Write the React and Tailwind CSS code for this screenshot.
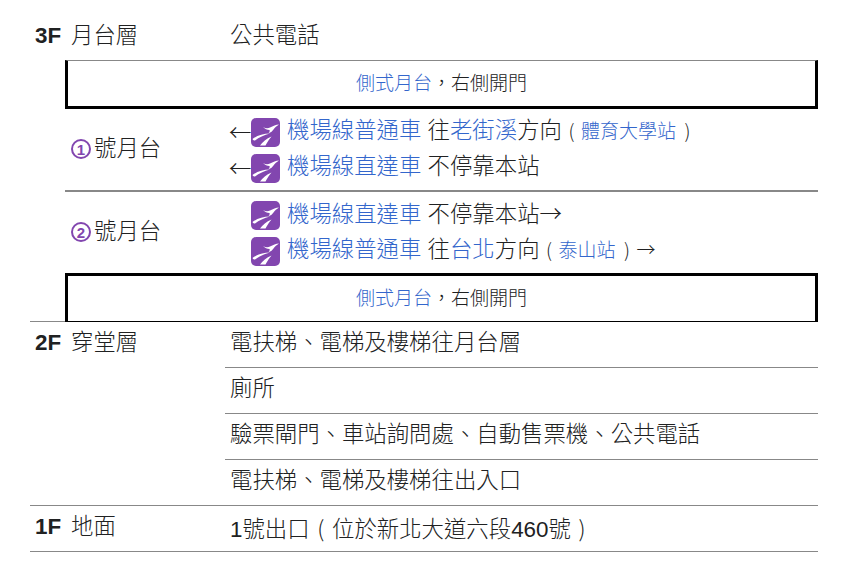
const FONT = "font-['Liberation_Sans','Noto_Sans_CJK_TC',sans-serif]";

const LineLogo = () => (
  <svg viewBox="0 0 29 29" className="w-[29px] h-[29px] shrink-0">
    <rect width="29" height="29" rx="5" fill="#8246af" />
    <path d="M1.5 21C6 17.5 12 15.5 19 15.5C13 17 8 19.5 4 22.5C3 22.5 2 22 1.5 21Z" fill="#fff" />
    <path d="M9 27.5C11.5 24 15.5 20.5 20.5 18.5C18.5 21 16 24.5 14.5 27.5Z" fill="#fff" />
    <path d="M12 9C14.5 10.5 17 10.5 19 9.5C22 8 25 6.5 28 6.5C25.5 8 24 9.5 22.5 11.5C21.5 13 20 14.5 17.5 15C18.5 14 19 13 18.5 12C16 12 14 11 12 9Z" fill="#fff" />
  </svg>
);

const Link = ({ children }) => <span className="text-[#3366cc]">{children}</span>;
const Small = ({ children }) => <span className="text-[19px]">{children}</span>;
const Arrow = ({ children }) => <span className="font-['Noto_Sans_CJK_TC']">{children}</span>;
const Paren = ({ children, className = '' }) => (
  <span className={`inline-block w-[1em] text-center font-['Noto_Sans_CJK_TC'] ${className}`}>{children}</span>
);

const SideBox = ({ className }) => (
  <div className={`h-[49px] flex-1 flex items-center justify-center border-x-[3px] border-black text-[19px] ${className}`}>
    <span><Link>側式月台</Link>，右側開門</span>
  </div>
);

const TrainLine = ({ before, name, children }) => (
  <div className="h-[35px] mb-px flex items-center">
    <span className="w-[22px] shrink-0"><Arrow>{before}</Arrow></span>
    <LineLogo />
    <span className="ml-[7px] -mt-[4px] whitespace-nowrap">
      <Link>{name}</Link> {children}
    </span>
  </div>
);

const Platform = ({ mark, className, children }) => (
  <div className={`flex ${className}`}>
    <div className="w-[164px] pl-[6px] -mt-[2px] shrink-0 flex items-center">
      <span className="w-5 h-5 mr-[3px] mt-[1px] flex items-center justify-center rounded-full border-2 border-[#8246af] text-[15px] leading-none font-bold text-[#8246af]">{mark}</span>
      <span>號月台</span>
    </div>
    <div className="pt-[6px]">{children}</div>
  </div>
);

const FloorName = ({ floor, name }) => (
  <div className="flex pl-[5px]">
    <span className="w-[36px] font-bold">{floor}</span>
    <span>{name}</span>
  </div>
);

export default function App() {
  return (
    <div className={`${FONT} bg-white min-h-screen pt-3 text-[22.4px] leading-[32px] font-light text-[#202122]`}>
      <div className="ml-[30px] w-[788px]">
        <div className="h-12 flex items-center">
          <div className="w-[195px]"><FloorName floor="3F" name="月台層" /></div>
          <div className="pl-[5px]">公共電話</div>
        </div>

        <div className="flex">
          <div className="w-[35px]" />
          <SideBox className="border-t border-t-[#888] border-b-[3px] border-b-black" />
        </div>

        <div className="ml-[35px]">
          <Platform mark="1" className="h-[83px] border-b-2 border-[#888]">
            <TrainLine before="←" name="機場線普通車">
              往<Link>老街溪</Link>方向<Small><Paren>(</Paren><Link>體育大學站</Link><Paren className="pl-[4px]">)</Paren></Small>
            </TrainLine>
            <TrainLine before="←" name="機場線直達車">不停靠本站</TrainLine>
          </Platform>
          <Platform mark="2" className="h-[81px]">
            <TrainLine name="機場線直達車">不停靠本站<Arrow>→</Arrow></TrainLine>
            <TrainLine name="機場線普通車">
              往<Link>台北</Link>方向<Small><Paren>(</Paren><Link>泰山站</Link><Paren className="pl-[4px]">)</Paren><span className="ml-[2px]"><Arrow>→</Arrow></span></Small>
            </TrainLine>
          </Platform>
        </div>

        <div className="flex">
          <div className="w-[35px] border-b border-[#888]" />
          <SideBox className="border-t-[3px] border-t-black border-b border-b-black" />
        </div>

        <div className="flex border-b border-[#888]">
          <div className="w-[195px] pt-[5px]"><FloorName floor="2F" name="穿堂層" /></div>
          <div className="flex-1">
            <div className="h-[46px] pl-[5px] pt-[5px] border-b border-[#888]">電扶梯、電梯及樓梯往月台層</div>
            <div className="h-[46px] pl-[5px] pt-[5px] border-b border-[#888]">廁所</div>
            <div className="h-[46px] pl-[5px] pt-[5px] border-b border-[#888]">驗票閘門、車站詢問處、自動售票機、公共電話</div>
            <div className="h-[45px] pl-[5px] pt-[5px]">電扶梯、電梯及樓梯往出入口</div>
          </div>
        </div>

        <div className="flex h-[46px] pt-[5px] border-b border-[#888]">
          <div className="w-[195px]"><FloorName floor="1F" name="地面" /></div>
          <div className="pl-[5px]">1號出口<Paren>(</Paren>位於新北大道六段460號<Paren>)</Paren></div>
        </div>
      </div>
    </div>
  );
}
